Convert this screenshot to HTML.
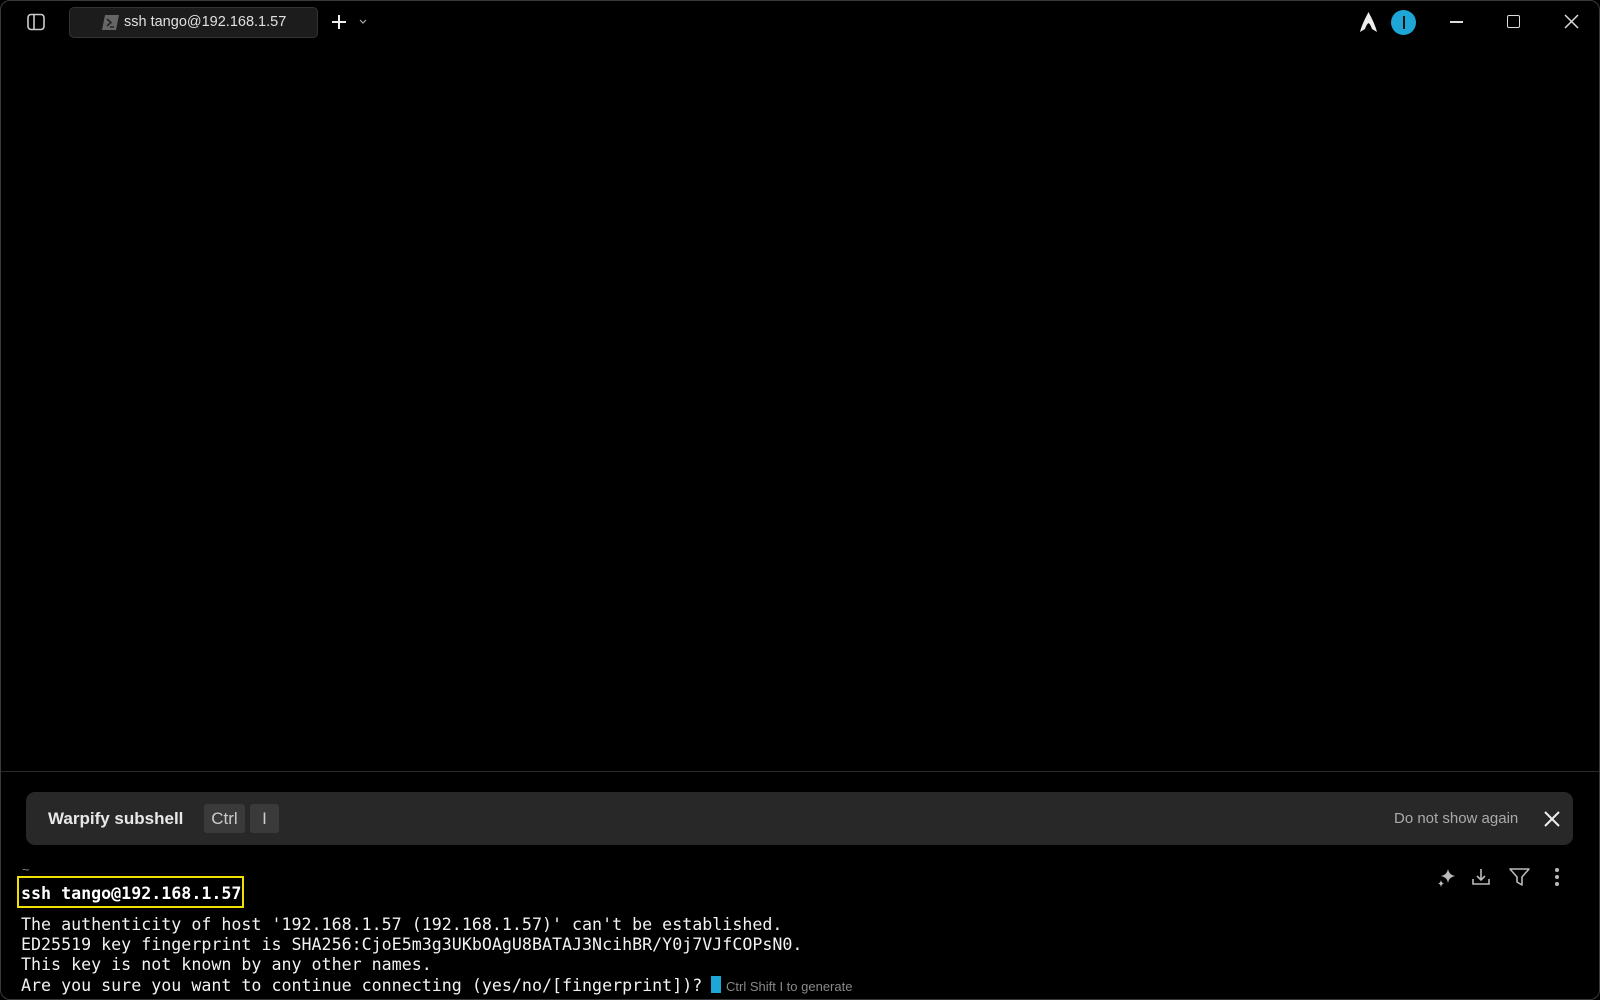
<!DOCTYPE html>
<html><head><meta charset="utf-8"><style>
*{margin:0;padding:0;box-sizing:border-box}
body{width:1600px;height:1000px;background:#000;overflow:hidden;position:relative;font-family:"Liberation Sans",sans-serif;color:#ddd}
.win{position:absolute;left:0;top:0;width:1600px;height:1000px;border:1px solid #3a3a3a;border-radius:10px}
.abs{position:absolute}
.tab{left:69px;top:7px;width:249px;height:31px;background:#1c1c1c;border:1px solid #333;border-radius:5px;font-size:14.5px;color:#e0e0e0;line-height:29px;padding-left:54px}
.sep{left:1px;top:771px;width:1598px;height:1px;background:#2a2a2a}
.banner{left:26px;top:792px;width:1547px;height:53px;background:#282828;border-radius:9px}
.key{background:#3a3a3a;border-radius:3px;height:29px;top:12px;font-size:17px;line-height:29px;text-align:center;color:#ccc}
.mono{font-family:"DejaVu Sans Mono","Liberation Mono",monospace;font-size:16.65px;color:#f2f2f2;white-space:pre}
</style></head><body>
<div class="win"></div>
<svg class="abs" style="left:27px;top:13px" width="18" height="18" viewBox="0 0 18 18"><rect x="1" y="1.5" width="16" height="15" rx="3" fill="none" stroke="#ccc" stroke-width="1.6"/><line x1="7" y1="2" x2="7" y2="16" stroke="#ccc" stroke-width="1.6"/></svg>
<div class="abs tab">ssh tango@192.168.1.57</div>
<svg class="abs" style="left:102px;top:15px" width="17" height="15" viewBox="0 0 17 15"><path d="M3 0H17L14 15H0Z" fill="#666"/><path d="M5 4L9 7.5L5 11M8 12H12" stroke="#222" stroke-width="1.5" fill="none"/></svg>
<svg class="abs" style="left:331px;top:14px" width="16" height="16"><path d="M8 1V15M1 8H15" stroke="#eee" stroke-width="2"/></svg>
<svg class="abs" style="left:359px;top:19px" width="8" height="6"><path d="M1 1L4 4L7 1" stroke="#aaa" stroke-width="1.2" fill="none"/></svg>
<svg class="abs" style="left:1360px;top:12px" width="17" height="21" viewBox="0 0 17 21"><path d="M8.5 0C6 5 2 12 0 20L5 17C6 14 7 12 8.5 11C10 12 11 14 12 17L17 20C15 12 11 5 8.5 0Z" fill="#eee"/></svg>
<div class="abs" style="left:1391px;top:10px;width:25px;height:25px;border-radius:50%;background:#1ea7d6"><div style="position:absolute;left:11.5px;top:6px;width:2px;height:13px;background:#111"></div></div>
<div class="abs" style="left:1450px;top:21px;width:13px;height:1.5px;background:#ddd"></div>
<div class="abs" style="left:1507px;top:15px;width:13px;height:13px;border:1.5px solid #ddd;border-radius:2px"></div>
<svg class="abs" style="left:1564px;top:14px" width="15" height="15"><path d="M1 1L14 14M14 1L1 14" stroke="#ddd" stroke-width="1.5"/></svg>
<div class="abs sep"></div>
<div class="abs banner">
<div class="abs" style="left:22px;top:0;line-height:53px;font-size:17px;font-weight:bold;color:#e8e8e8">Warpify subshell</div>
<div class="abs key" style="left:178px;width:41px">Ctrl</div>
<div class="abs key" style="left:224px;width:29px">I</div>
<div class="abs" style="left:1368px;top:0;line-height:53px;font-size:15px;color:#aaa">Do not show again</div>
<svg class="abs" style="left:1518px;top:19px" width="16" height="16"><path d="M1 1L15 15M15 1L1 15" stroke="#eee" stroke-width="2"/></svg>
</div>
<div class="abs" style="left:22px;top:862px;font-size:13px;color:#888">~</div>
<div class="abs" style="left:17px;top:876px;width:227px;height:32px;border:2px solid #f0e000"></div>
<div class="abs mono" style="left:21px;top:884px;font-weight:bold;color:#fff">ssh tango@192.168.1.57</div>
<div class="abs mono" style="left:21px;top:915px;line-height:20.2px">The authenticity of host '192.168.1.57 (192.168.1.57)' can't be established.
ED25519 key fingerprint is SHA256:CjoE5m3g3UKbOAgU8BATAJ3NcihBR/Y0j7VJfCOPsN0.
This key is not known by any other names.
Are you sure you want to continue connecting (yes/no/[fingerprint])?</div>
<div class="abs" style="left:711px;top:976px;width:10px;height:17px;background:#1ea7d6"></div>
<div class="abs" style="left:726px;top:979px;font-size:13px;color:#888">Ctrl Shift I to generate</div>
<svg class="abs" style="left:1436px;top:868px" width="20" height="20" viewBox="0 0 20 20"><path d="M12 1Q13 7 19 8Q13 9 12 15Q11 9 5 8Q11 7 12 1Z M5 12Q5.5 15 8 15.5Q5.5 16 5 19Q4.5 16 2 15.5Q4.5 15 5 12Z" fill="#bbb"/></svg>
<svg class="abs" style="left:1471px;top:867px" width="20" height="20"><path d="M10 2V13M6 9L10 13L14 9M2 12V17H18V12" stroke="#bbb" stroke-width="1.6" fill="none"/></svg>
<svg class="abs" style="left:1509px;top:867px" width="21" height="20"><path d="M1 2H20L13 10V18L8 15V10Z" stroke="#bbb" stroke-width="1.6" fill="none" stroke-linejoin="round"/></svg>
<svg class="abs" style="left:1554px;top:867px" width="6" height="20"><circle cx="3" cy="3" r="2" fill="#bbb"/><circle cx="3" cy="10" r="2" fill="#bbb"/><circle cx="3" cy="17" r="2" fill="#bbb"/></svg>
</body></html>
